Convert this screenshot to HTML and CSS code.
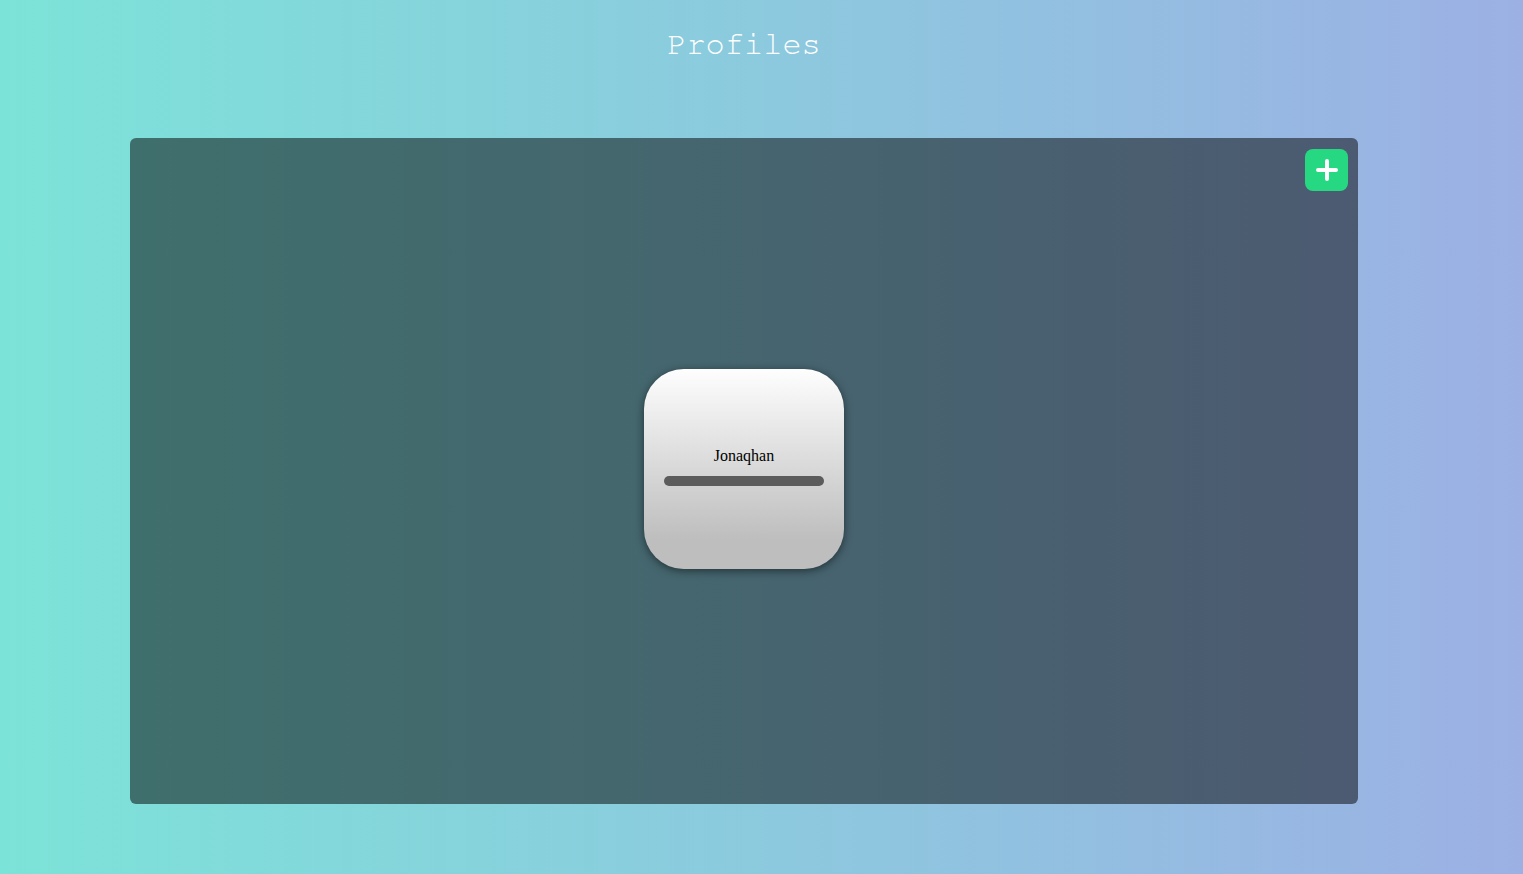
FILE: index.html
```html
<!DOCTYPE html>
<html>
<head>
<meta charset="utf-8">
<link rel="stylesheet" href="styles.css">
</head>
<body>
<div class="page">
  <h1 class="title">Profiles</h1>
  <div class="panel">
    <button class="add-btn" aria-label="Add profile">
      <svg width="22" height="22" viewBox="0 0 22 22"><path d="M11 2v18M2 11h18" stroke="#fff" stroke-width="4" stroke-linecap="round"/></svg>
    </button>
    <div class="card">
      <div class="name">Jonaqhan</div>
      <div class="bar"></div>
    </div>
  </div>
</div>
</body>
</html>
```
FILE: styles.css
```css
html, body {
  margin: 0;
  padding: 0;
  height: 100%;
}
body {
  background: linear-gradient(to right, #7ce3d8, #9cb0e4);
  font-family: "Liberation Serif", serif;
  overflow: hidden;
}
.page {
  width: 1228px;
  margin-left: 130px;
  display: flex;
  flex-direction: column;
}
.title {
  margin: 0;
  height: 138px;
  padding-top: 25px;
  box-sizing: border-box;
  text-align: center;
  font-family: "Nimbus Mono PS", "Nimbus Mono L", "FreeMono", "Courier", "Liberation Mono", monospace;
  font-weight: normal;
  font-size: 32px;
  line-height: 38px;
  color: #fff;
}
.panel {
  position: relative;
  height: 666px;
  border-radius: 6px;
  background: rgba(0, 0, 0, 0.5);
  display: flex;
  align-items: center;
  justify-content: center;
}
.add-btn {
  position: absolute;
  top: 11px;
  right: 10px;
  width: 43px;
  height: 42px;
  border: none;
  border-radius: 8px;
  background: #27d882;
  display: flex;
  align-items: center;
  justify-content: center;
  padding: 0;
}
.add-btn svg { display: block; }
.card {
  width: 200px;
  height: 200px;
  margin-top: -5px;
  padding-bottom: 4px;
  box-sizing: border-box;
  border-radius: 40px;
  background: linear-gradient(to bottom, #fefefe 0%, #bebebe 85%, #bebebe 100%);
  box-shadow: 0 2px 8px rgba(0, 0, 0, 0.5);
  display: flex;
  flex-direction: column;
  align-items: center;
  justify-content: center;
  gap: 11px;
}
.name {
  font-size: 16px;
  line-height: 18px;
  color: #000;
}
.bar {
  width: 160px;
  height: 10px;
  border-radius: 5px;
  background: #5c5c5c;
}
```
